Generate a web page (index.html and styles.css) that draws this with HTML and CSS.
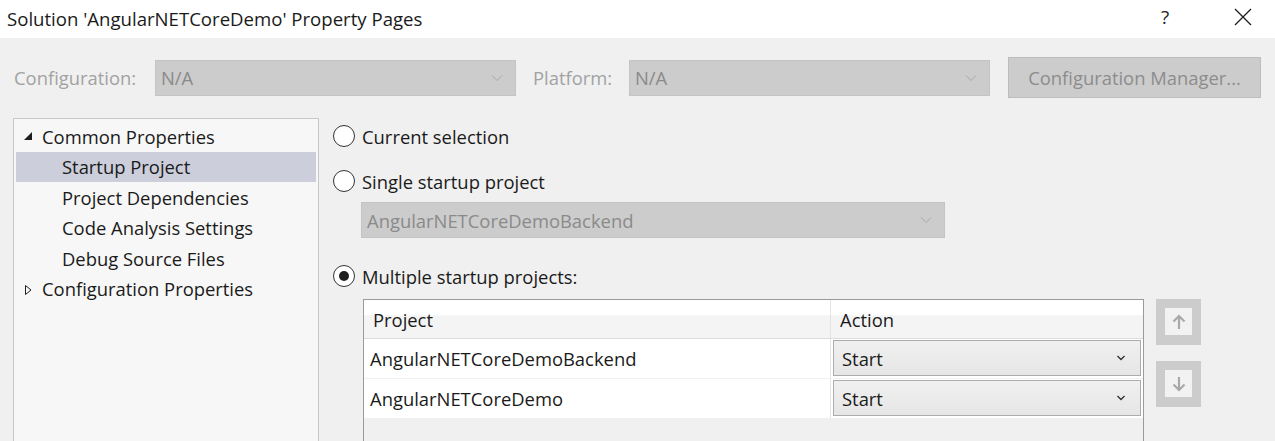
FILE: index.html
```html
<!DOCTYPE html>
<html>
<head>
<meta charset="utf-8">
<link rel="stylesheet" href="styles.css">
</head>
<body>
<div class="window">
  <div class="titlebar">
    <div class="title">Solution 'AngularNETCoreDemo' Property Pages</div>
    <div class="tb-buttons">
      <span class="help">?</span>
      <svg class="close" width="18" height="18" viewBox="0 0 18 18"><path d="M1 1 L17 17 M17 1 L1 17" stroke="#1e1e1e" stroke-width="1.3" fill="none"/></svg>
    </div>
  </div>
  <div class="toolbar">
    <span class="lbl lbl-config">Configuration:</span>
    <div class="combo combo-dis combo-config"><span>N/A</span><svg class="chev" width="12" height="8" viewBox="0 0 12 8"><path d="M1 1.5 L6 6.5 L11 1.5" stroke="#a8a8a8" stroke-width="1" fill="none"/></svg></div>
    <span class="lbl lbl-platform">Platform:</span>
    <div class="combo combo-dis combo-platform"><span>N/A</span><svg class="chev" width="12" height="8" viewBox="0 0 12 8"><path d="M1 1.5 L6 6.5 L11 1.5" stroke="#a8a8a8" stroke-width="1" fill="none"/></svg></div>
    <div class="btn-cm">Configuration Manager...</div>
  </div>
  <div class="main">
    <div class="tree">
      <div class="node"><svg class="tri" width="10" height="10" viewBox="0 0 10 10"><path d="M9 1 L9 9 L1 9 Z" fill="#1e1e1e"/></svg><span>Common Properties</span></div>
      <div class="node child selected"><span>Startup Project</span></div>
      <div class="node child"><span>Project Dependencies</span></div>
      <div class="node child"><span>Code Analysis Settings</span></div>
      <div class="node child"><span>Debug Source Files</span></div>
      <div class="node"><svg class="tri" width="10" height="12" viewBox="0 0 10 12"><path d="M2.5 1.5 L8 6 L2.5 10.5 Z" fill="none" stroke="#1e1e1e" stroke-width="1"/></svg><span>Configuration Properties</span></div>
    </div>
    <div class="content">
      <div class="radio-row r1"><span class="radio"></span><span>Current selection</span></div>
      <div class="radio-row r2"><span class="radio"></span><span>Single startup project</span></div>
      <div class="combo combo-dis combo-single"><span>AngularNETCoreDemoBackend</span><svg class="chev" width="12" height="8" viewBox="0 0 12 8"><path d="M1 1.5 L6 6.5 L11 1.5" stroke="#a8a8a8" stroke-width="1" fill="none"/></svg></div>
      <div class="radio-row r3"><span class="radio checked"></span><span>Multiple startup projects:</span></div>
      <div class="grid-area">
        <div class="grid">
          <div class="grid-head">
            <div class="c1">Project</div>
            <div class="c2">Action</div>
          </div>
          <div class="grid-row">
            <div class="c1">AngularNETCoreDemoBackend</div>
            <div class="c2"><div class="action-combo"><span>Start</span><svg width="10" height="6" viewBox="0 0 10 6"><path d="M1.5 1 L5 4.5 L8.5 1" stroke="#333" stroke-width="1.4" fill="none"/></svg></div></div>
          </div>
          <div class="grid-row">
            <div class="c1">AngularNETCoreDemo</div>
            <div class="c2"><div class="action-combo"><span>Start</span><svg width="10" height="6" viewBox="0 0 10 6"><path d="M1.5 1 L5 4.5 L8.5 1" stroke="#333" stroke-width="1.4" fill="none"/></svg></div></div>
          </div>
        </div>
        <div class="movers">
          <div class="mover"><div class="mover-in"><svg width="14" height="16" viewBox="0 0 14 16"><path d="M7 15 L7 2 M1.5 7.5 L7 2 L12.5 7.5" stroke="#a9a9a9" stroke-width="2.2" fill="none"/></svg></div></div>
          <div class="mover"><div class="mover-in"><svg width="14" height="16" viewBox="0 0 14 16"><path d="M7 1 L7 14 M1.5 8.5 L7 14 L12.5 8.5" stroke="#a9a9a9" stroke-width="2.2" fill="none"/></svg></div></div>
        </div>
      </div>
    </div>
  </div>
</div>
</body>
</html>
```
FILE: styles.css
```css
* { box-sizing: border-box; }
html, body { margin: 0; padding: 0; }
body {
  width: 1275px;
  height: 441px;
  overflow: hidden;
  background: #f0f0f0;
  font-family: "Open Sans", "Noto Sans", sans-serif;
  font-size: 18.4px;
  color: #1a1a1a;
}
.window { width: 1275px; height: 441px; display: flex; flex-direction: column; overflow: hidden; }
.titlebar {
  height: 38px;
  background: #ffffff;
  display: flex;
  align-items: center;
  justify-content: space-between;
  padding-left: 7px;
  flex: none;
}
.title { font-size: 18.6px; color: #1a1a1a; margin-top: -2px; }
.tb-buttons { display: flex; align-items: center; height: 100%; }
.help { font-size: 19px; color: #1e1e1e; width: 20px; margin-right: 53px; margin-top: -4px; }
.close { margin-right: 23px; margin-top: -4px; }

.toolbar {
  flex: none;
  display: flex;
  align-items: center;
  height: 41px;
  margin-top: 19px;
  padding-left: 14px;
}
.lbl { color: #a2a2a2; }
.lbl-config { width: 141px; }
.lbl-platform { width: 96px; margin-left: 17px; }
.combo {
  display: flex;
  align-items: center;
  justify-content: space-between;
  height: 36px;
  padding: 0 12px 0 5px;
}
.combo-dis { background: #cccccc; border: 1px solid #c4c4c4; color: #8a8a8a; }
.combo-config { width: 361px; }
.combo-platform { width: 361px; }
.btn-cm {
  width: 253px;
  height: 41px;
  margin-left: 18px;
  background: #cccccc;
  border: 1px solid #bdbdbd;
  color: #8d8d8d;
  display: flex;
  align-items: center;
  justify-content: center;
}

.main { flex: 1; display: flex; margin-top: 20px; min-height: 0; }
.tree {
  width: 306px;
  margin-left: 13px;
  border: 1px solid #c8c8c8;
  border-bottom: none;
  background: #f7f7f7;
  padding: 2px 2px 0 2px;
}
.node {
  height: 30.5px;
  display: flex;
  align-items: center;
  padding-left: 26px;
  position: relative;
  white-space: nowrap;
}
.node .tri { position: absolute; left: 7px; top: 10px; }
.node.child { padding-left: 46px; }
.node.selected { background: #cccedb; }

.content { flex: 1; padding-left: 14px; display: flex; flex-direction: column; min-height: 0; }
.radio-row { display: flex; align-items: center; height: 30px; flex: none; }
.r1 { margin-top: 3px; }
.r2 { margin-top: 15px; }
.r3 { margin-top: 23px; }
.radio {
  width: 22px;
  height: 22px;
  border-radius: 50%;
  border: 1.5px solid #333;
  background: #fff;
  margin-right: 7px;
  position: relative;
  flex: none;
}
.radio.checked::after {
  content: "";
  position: absolute;
  left: 4.5px; top: 4.5px;
  width: 10px; height: 10px;
  border-radius: 50%;
  background: #1e1e1e;
}
.combo-single { width: 584px; margin-left: 28px; margin-top: 6px; flex: none; }

.grid-area { display: flex; margin-top: 8px; margin-left: 30px; flex: 1; min-height: 0; }
.grid {
  width: 781px;
  height: 100%;
  border: 1px solid #9a9a9a;
  border-bottom: none;
  background: #f0f0f0;
}
.grid-head {
  display: flex;
  height: 39px;
  background: linear-gradient(#ffffff 0%, #ffffff 40%, #f4f4f4 41%, #f4f4f4 100%);
  border-bottom: 1px solid #dcdcdc;
}
.grid-head .c1 { width: 467px; padding-left: 9px; display: flex; align-items: center; border-right: 1px solid #e4e4e4; }
.grid-head .c2 { flex: 1; padding-left: 9px; display: flex; align-items: center; }
.grid-row { display: flex; height: 40px; background: #fff; border-bottom: 1px solid #f0f0f0; }
.grid-row .c1 { width: 467px; padding-left: 6px; display: flex; align-items: center; border-right: 1px solid #e4e4e4; }
.grid-row .c2 { flex: 1; padding: 1px 2px 1px 2px; }
.action-combo {
  height: 36px;
  border: 1px solid #acacac;
  background: linear-gradient(#f0f0f0, #e6e6e6);
  display: flex;
  align-items: center;
  justify-content: space-between;
  padding: 0 14px 0 8px;
}
.movers { margin-left: 12px; display: flex; flex-direction: column; gap: 16px; }
.mover {
  width: 45px;
  height: 46px;
  background: #cccccc;
  padding: 9px;
}
.mover-in {
  width: 27px;
  height: 27px;
  background: #f2f2f2;
  display: flex;
  align-items: center;
  justify-content: center;
}
```
